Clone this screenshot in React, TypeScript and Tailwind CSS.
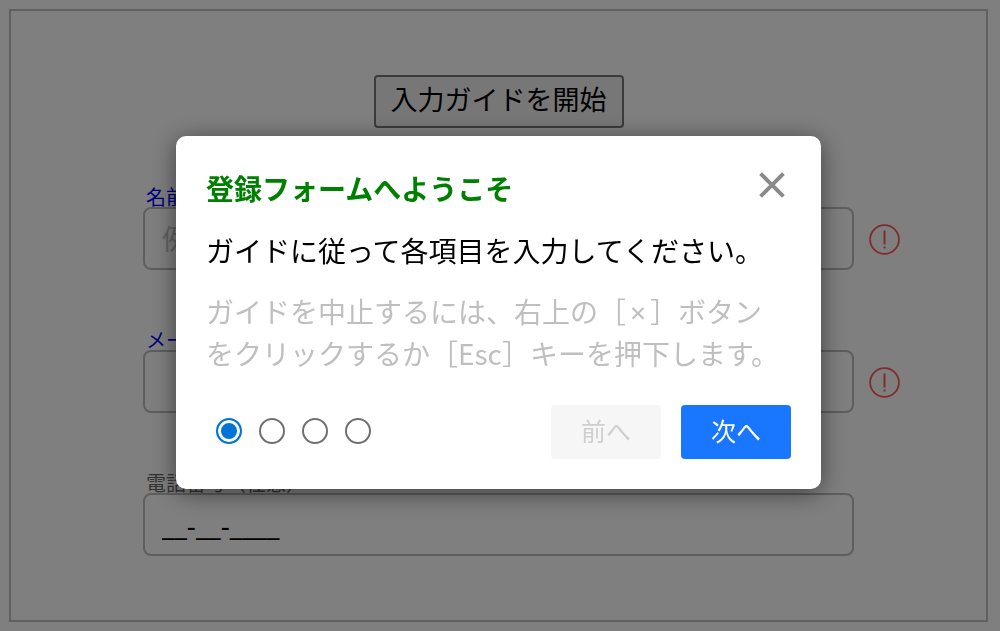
import { useState } from 'react'

const ErrorIcon = () => {
    return (
        <svg role="img" aria-label="入力エラー" className="mt-0.5 w-[31px] h-[31px]" viewBox="0 0 31 31" fill="none" stroke="#ff5b52" strokeWidth="2">
            <circle cx="15.5" cy="15.5" r="14.4" strokeWidth="1.8" />
            <path d="M15.5 6.5v14M15.5 22.4v2" />
        </svg>
    )
}

const CloseIcon = () => {
    return (
        <svg aria-hidden="true" className="w-[26px] h-[26px]" viewBox="0 0 26 26" fill="none" stroke="#8a8a8a" strokeWidth="4">
            <path d="M1.6 1.6l22.8 22.8M24.4 1.6L1.6 24.4" />
        </svg>
    )
}

type FieldProps = {
    id: string
    label: string
    type?: string
    placeholder?: string
    defaultValue?: string
    required?: boolean
}

const Field = ({ id, label, type = 'text', placeholder, defaultValue, required }: FieldProps) => {
    return (
        <div>
            <label htmlFor={id} className={`block pl-[3px] text-[20px] leading-5 ${required ? 'text-[#0000ff]' : 'text-[#666666]'}`}>
                {label}
            </label>
            <div className="grid grid-cols-[1fr_31px] items-center gap-[15px]">
                <input
                    id={id}
                    type={type}
                    placeholder={placeholder}
                    defaultValue={defaultValue}
                    required={required}
                    className="w-full min-w-0 h-[63px] rounded-lg border-2 border-[#bcbcbc] bg-white px-[17px] font-['Noto_Sans','Noto_Sans_CJK_JP',sans-serif] text-[28px] text-black placeholder:text-[#c4c4c4]"
                />
                {required && <ErrorIcon />}
            </div>
        </div>
    )
}

const steps = ['ようこそ', '名前', 'メール', '電話番号']

const GuideDialog = () => {
    const [step, setStep] = useState(0)

    return (
        <div className="fixed inset-0 flex items-center justify-center bg-black/50 pr-[3px] pb-1.5">
            <div
                role="dialog"
                aria-modal="true"
                aria-labelledby="guide-title"
                className="w-full max-w-[645px] rounded-[10px] bg-white px-[30px] pt-[31px] pb-[30px] shadow-[0_4px_24px_rgba(0,0,0,0.5)]"
            >
                <div className="flex items-center justify-between">
                    <h2 id="guide-title" className="text-[28px] leading-[42px] font-bold text-[#008000]">
                        登録フォームへようこそ
                    </h2>
                    <button type="button" aria-label="閉じる" className="mr-1.5 pb-1.5">
                        <CloseIcon />
                    </button>
                </div>
                <p className="mt-5 text-[28px] leading-[42px] text-black">
                    ガイドに従って各項目を入力してください。
                </p>
                <p className="mt-5 text-[28px] leading-[41px] text-[#bfbfbf]">
                    ガイドを中止するには、右上の［<span className="px-1 font-['Noto_Sans',sans-serif]">×</span>］ボタン
                    <br />
                    をクリックするか［Esc］キーを押下します。
                </p>
                <div className="mt-[31px] flex items-center justify-between">
                    <div className="flex gap-[17px] pb-0.5 pl-2.5">
                        {steps.map((name, i) => (
                            <input
                                key={name}
                                type="radio"
                                name="guide-step"
                                aria-label={name}
                                checked={step === i}
                                onChange={() => setStep(i)}
                                className="size-[26px] appearance-none rounded-full border-2 border-[#707070] bg-white checked:border-[#0075d7] checked:bg-[#0075d7] checked:shadow-[inset_0_0_0_3px_white]"
                            />
                        ))}
                    </div>
                    <div className="flex gap-5">
                        <button
                            type="button"
                            disabled={step === 0}
                            onClick={() => setStep(step - 1)}
                            className="w-[110px] h-[54px] rounded bg-[#1976ff] pb-[3px] text-[25px] text-white disabled:bg-[#f6f6f6] disabled:text-[#cfcfcf]"
                        >
                            前へ
                        </button>
                        <button
                            type="button"
                            onClick={() => setStep(Math.min(step + 1, steps.length - 1))}
                            className="w-[110px] h-[54px] rounded bg-[#1976ff] pb-[3px] text-[25px] text-white"
                        >
                            次へ
                        </button>
                    </div>
                </div>
            </div>
        </div>
    )
}

export default function App() {
    return (
        <div className="flex min-h-screen bg-white pt-[9px] pb-[9px] pl-[9px] pr-3 font-['Noto_Sans_CJK_JP',sans-serif]">
            <main className="flex-1 border-2 border-[#c0c0c0] pt-16 pb-16">
                <div className="flex justify-center">
                    <button type="button" className="h-[53px] rounded border-2 border-[#767676] bg-[#efefef] px-[15px] pb-1.5 text-[27px] leading-10 text-black">
                        入力ガイドを開始
                    </button>
                </div>
                <form className="mt-[59px] flex flex-col gap-[60px] pl-[132px] pr-[86px]">
                    <Field id="name" label="名前" placeholder="例" required />
                    <Field id="email" label="メール" type="email" required />
                    <Field id="tel" label="電話番号（任意）" type="tel" defaultValue="__-__-____" />
                </form>
            </main>
            <GuideDialog />
        </div>
    )
}
